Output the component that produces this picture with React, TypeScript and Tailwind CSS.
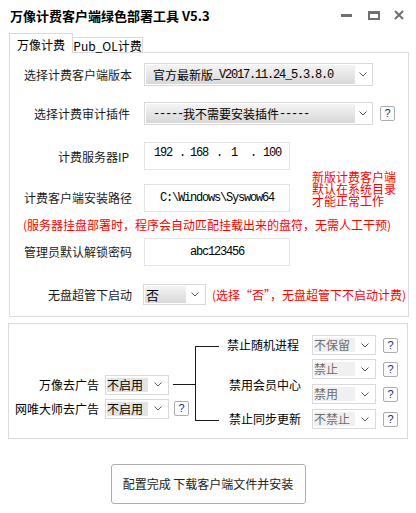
import React from "react";

const CN = "font-['Noto_Sans_CJK_SC',sans-serif]";
const MONO = "font-['Liberation_Mono','Noto_Sans_CJK_SC',monospace] tracking-[-1.2px]";

function Chevron() {
  return (
    <svg width="8" height="5" viewBox="0 0 8 5" className="shrink-0">
      <polyline points="0.5,0.5 4,4 7.5,0.5" fill="none" stroke="#5a5a5a" strokeWidth="1" />
    </svg>
  );
}

function Help() {
  return (
    <div className="w-[15px] h-[15px] border border-[#adadad] rounded-[2px] bg-[#fdfdfd] flex items-center justify-center text-[11px] leading-none text-[#1d2b6a] font-['Liberation_Sans',sans-serif]">
      ?
    </div>
  );
}

function BigCombo({ box, arrow, pad, children }: { box: string; arrow: string; pad: string; children: React.ReactNode }) {
  return (
    <div className={`${box} border border-[#d9d9d9] bg-white p-px flex`}>
      <div className={`flex-1 flex items-center bg-[linear-gradient(#f4f4f4,#d8d8d8)] ${pad} text-[12px] leading-none text-black whitespace-nowrap overflow-hidden`}>
        {children}
      </div>
      <div className={`${arrow} flex items-center justify-center`}>
        <Chevron />
      </div>
    </div>
  );
}

function SmallCombo({ value, dim }: { value: string; dim?: boolean }) {
  return (
    <div className="w-[64px] h-[20px] border border-[#dadada] bg-white flex items-center pl-px">
      <div
        className={`w-[41px] h-[14px] flex items-center text-[12px] leading-none ${
          dim ? "bg-[#f0f0f0] text-[#6d6d6d]" : "bg-[#e3e3e3] text-black"
        }`}
      >
        {value}
      </div>
      <div className="flex-1 flex justify-center">
        <Chevron />
      </div>
    </div>
  );
}

function Box({ children }: { children: React.ReactNode }) {
  return (
    <div className="w-[146px] h-[28px] border border-[#e3e3e3] bg-white flex items-center justify-center text-[12px] leading-none text-black">
      {children}
    </div>
  );
}

export default function App() {
  return (
    <div className={`w-[416px] h-[513px] bg-white overflow-hidden text-[12px] text-[#1a1a1a] ${CN}`}>
      {/* title bar */}
      <div className="h-[30px] flex items-center pl-[10px] pr-[12px]">
        <span className="text-[13px] font-bold text-black leading-none">万像计费客户端绿色部署工具 V5.3</span>
        <div className="ml-auto flex items-center">
          <div className="w-[11px] h-[3px] bg-[#707070]" />
          <div className="ml-[16px] w-[12px] h-[9px] border-2 border-t-[3px] border-[#707070]" />
          <svg className="ml-[14px]" width="10" height="10" viewBox="0 0 10 10">
            <path d="M1 1 L9 9 M9 1 L1 9" stroke="#707070" strokeWidth="2" />
          </svg>
        </div>
      </div>

      {/* tabs */}
      <div className="mt-[3px] ml-[9px] flex items-end h-[19px] relative z-10">
        <div className="w-[64px] h-[20px] -mb-px border border-b-0 border-[#d9d9d9] bg-white flex items-center justify-center pt-[3px] text-black">
          万像计费
        </div>
        <div className="w-[70px] h-[15px] border border-l-0 border-b-0 border-[#d9d9d9] bg-white flex items-center justify-center pt-[1px] text-black">
          Pub_OL计费
        </div>
      </div>

      {/* panel 1 */}
      <div className="ml-[9px] w-[400px] h-[265px] border border-[#dcdcdc] pl-px">
        <div className="mt-[10px] flex items-center h-[23px]">
          <div className="w-[121px] text-right">选择计费客户端版本</div>
          <div className="ml-[12px]">
            <BigCombo box="w-[229px] h-[23px]" arrow="w-[16px]" pad="pl-[7px]">
              <span>官方最新版</span>
              <span className={MONO}>_V2017.11.24_5.3.8.0</span>
            </BigCombo>
          </div>
        </div>

        <div className="mt-[16px] flex items-center h-[23px]">
          <div className="w-[121px] text-right pr-[2px]">选择计费审计插件</div>
          <div className="ml-[12px]">
            <BigCombo box="w-[229px] h-[23px]" arrow="w-[16px]" pad="pl-[7px]">
              <span className={MONO}>-----</span>
              <span>我不需要安装插件</span>
              <span className={MONO}>-----</span>
            </BigCombo>
          </div>
          <div className="ml-[7px]">
            <Help />
          </div>
        </div>

        <div className="mt-[17px] flex">
          <div>
            <div className="flex items-center h-[28px]">
              <div className="w-[121px] text-right pr-[3px] pt-[2px]">计费服务器IP</div>
              <div className="ml-[12px] w-[146px] h-[28px] border border-[#e3e3e3] bg-white flex items-start pt-[3px] pl-[9px] text-[12px] leading-[14px] text-black">
                <span className={MONO}>192</span>
                <span className={`${MONO} ml-[7px]`}>.</span>
                <span className={`${MONO} ml-[5px]`}>168</span>
                <span className={`${MONO} ml-[8px]`}>.</span>
                <span className={`${MONO} ml-[9px]`}>1</span>
                <span className={`${MONO} ml-[13px]`}>.</span>
                <span className={`${MONO} ml-[7px]`}>100</span>
              </div>
            </div>
            <div className="mt-[14px] flex items-center h-[28px]">
              <div className="w-[121px] text-right">计费客户端安装路径</div>
              <div className="ml-[12px]">
                <Box>
                  <span className={MONO}>{"C:\\Windows\\Syswow64"}</span>
                </Box>
              </div>
            </div>
          </div>
          <div className="ml-[22px] pt-[29px] text-[#ff0000] leading-[12px]">
            新版计费客户端
            <br />
            默认在系统目录
            <br />
            才能正常工作
          </div>
        </div>

        <div className="mt-[6px] ml-[12px] h-[14px] leading-[14px] text-[#ff0000] whitespace-nowrap">
          (服务器挂盘部署时，程序会自动匹配挂载出来的盘符，无需人工干预)
        </div>

        <div className="mt-[6px] flex items-center h-[28px]">
          <div className="w-[121px] text-right">管理员默认解锁密码</div>
          <div className="ml-[12px]">
            <Box>
              <span className={MONO}>abc123456</span>
            </Box>
          </div>
        </div>

        <div className="mt-[18px] flex items-center h-[21px]">
          <div className="w-[121px] text-right">无盘超管下启动</div>
          <div className="ml-[11px]">
            <BigCombo box="w-[63px] h-[21px]" arrow="w-[18px]" pad="pl-[1px]">
              <span className="text-[13px]">否</span>
            </BigCombo>
          </div>
          <div className="ml-[6px] text-[#ff0000] whitespace-nowrap">(选择“否”，无盘超管下不启动计费)</div>
        </div>
      </div>

      {/* panel 2 */}
      <div className="mt-[6px] ml-[8px] w-[400px] h-[116px] border border-[#dcdcdc] flex items-start text-black">
        <div className="w-[186px] pt-[51px]">
          <div className="flex items-center h-[19px]">
            <div className="w-[90px] text-right">万像去广告</div>
            <div className="ml-[6px]">
              <SmallCombo value="不启用" />
            </div>
            <div className="ml-[4px] flex-1 h-px bg-[#1a1a1a]" />
          </div>
          <div className="mt-[5px] flex items-center h-[19px]">
            <div className="w-[90px] text-right">网唯大师去广告</div>
            <div className="ml-[6px]">
              <SmallCombo value="不启用" />
            </div>
            <div className="ml-[5px]">
              <Help />
            </div>
          </div>
        </div>

        <div className="mt-[22px] w-[24px] h-[75px] border-l border-y border-[#1a1a1a]" />

        <div className="ml-[8px] pt-[11px]">
          <div className="flex items-center h-[20px]">
            <div className="w-[85px]">禁止随机进程</div>
            <SmallCombo value="不保留" dim />
            <div className="ml-[7px]">
              <Help />
            </div>
          </div>
          <div className="mt-[4px] flex">
            <div className="w-[85px] pl-[2px] flex items-center pt-[6px]">禁用会员中心</div>
            <div>
              <div className="flex items-center h-[20px]">
                <SmallCombo value="禁止" dim />
                <div className="ml-[7px]">
                  <Help />
                </div>
              </div>
              <div className="mt-[5px] flex items-center h-[20px]">
                <SmallCombo value="禁用" dim />
                <div className="ml-[7px]">
                  <Help />
                </div>
              </div>
            </div>
          </div>
          <div className="mt-[5px] flex items-center h-[20px]">
            <div className="w-[85px] pl-[2px]">禁止同步更新</div>
            <SmallCombo value="不禁止" dim />
            <div className="ml-[7px]">
              <Help />
            </div>
          </div>
        </div>
      </div>

      {/* action */}
      <div className="mt-[25px] mx-auto w-[195px] h-[40px] border border-[#adadad] rounded-[3px] bg-[#fdfdfd] flex items-center justify-center text-[#222]">
        配置完成 下载客户端文件并安装
      </div>
    </div>
  );
}
